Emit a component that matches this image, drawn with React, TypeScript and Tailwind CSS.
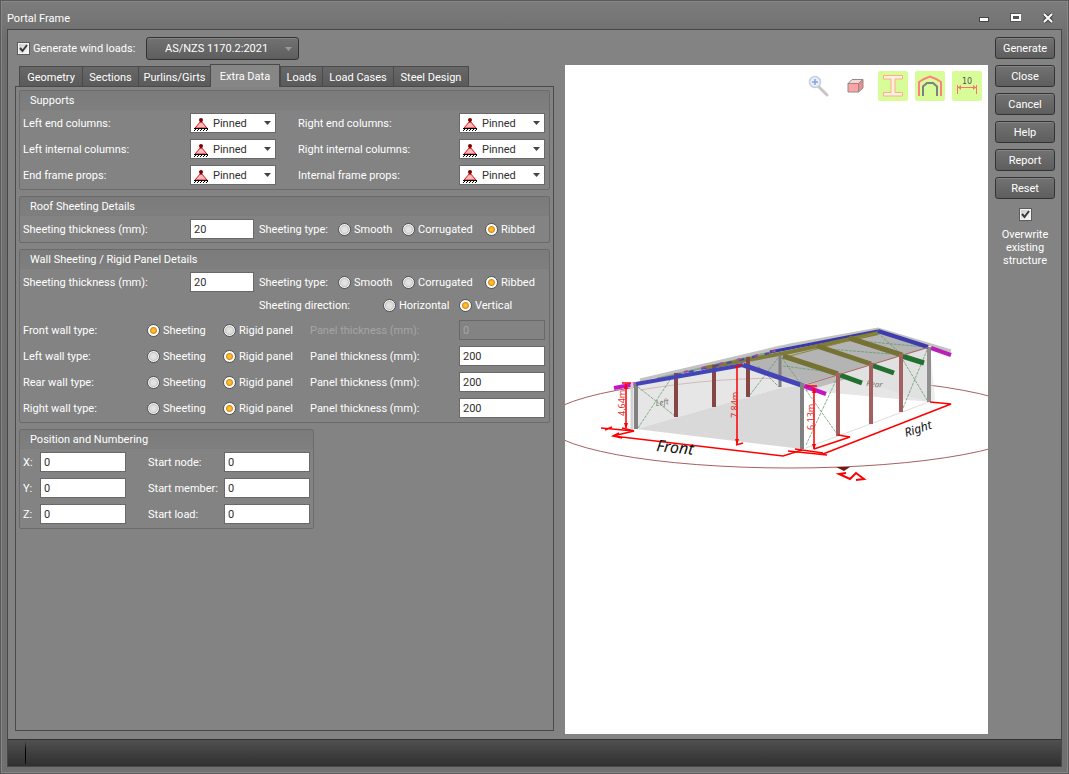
import { useId, useState, type ReactNode } from 'react';

const TABS = [
  { title: 'Geometry', width: 'w-[63px]' },
  { title: 'Sections', width: 'w-14' },
  { title: 'Purlins/Girts', width: 'w-[72px]' },
  { title: 'Extra Data', width: 'w-[70px]' },
  { title: 'Loads', width: 'w-[42px]' },
  { title: 'Load Cases', width: 'w-[71px]' },
  { title: 'Steel Design', width: 'w-[76px]' },
];
const ACTIONS = ['Generate', 'Close', 'Cancel', 'Help', 'Report', 'Reset'];

const SUPPORTS = [
  'Left end columns:',
  'Right end columns:',
  'Left internal columns:',
  'Right internal columns:',
  'End frame props:',
  'Internal frame props:',
];

const WALLS = [
  { label: 'Front wall type:', type: 'Sheeting', thickness: '0' },
  { label: 'Left wall type:', type: 'Rigid panel', thickness: '200' },
  { label: 'Rear wall type:', type: 'Rigid panel', thickness: '200' },
  { label: 'Right wall type:', type: 'Rigid panel', thickness: '200' },
];

const NUMBERING = [
  ['X:', 'Start node:'],
  ['Y:', 'Start member:'],
  ['Z:', 'Start load:'],
];

function CheckBox({ id }: { id: string }) {
  return (
    <span className="grid size-[13px] shrink-0">
      <input
        id={id}
        type="checkbox"
        defaultChecked
        className="peer col-start-1 row-start-1 size-[13px] appearance-none border border-[#5c5c5c] bg-linear-to-br from-[#c8c8c8] to-white shadow-[inset_0_0_0_1px_#f4f4f4]"
      />
      <svg
        viewBox="0 0 13 13"
        className="pointer-events-none invisible col-start-1 row-start-1 size-[13px] peer-checked:visible"
      >
        <path d="M3 6 L5.5 9 L10 3" fill="none" stroke="#3a3a3a" strokeWidth="2" />
      </svg>
    </span>
  );
}

function Radio({ name, label, checked, onChange }: {
  name: string;
  label: string;
  checked: boolean;
  onChange: () => void;
}) {
  return (
    <label className="flex items-center gap-[3px] whitespace-nowrap">
      <input
        type="radio"
        name={name}
        checked={checked}
        onChange={onChange}
        className="size-[13px] shrink-0 appearance-none rounded-full border border-[#555] bg-[radial-gradient(circle,#e6e6e6_0px,#dedede_3px,#c4c4c4_4px,#f4f4f4_5px)] checked:bg-[radial-gradient(circle,#ffd23c_0px,#f9b01c_2px,#d98a20_3px,#ffffff_4px)]"
      />
      {label}
    </label>
  );
}

function RadioSet({ options, initial, className }: { options: string[]; initial: string; className: string }) {
  const name = useId();
  const [value, setValue] = useState(initial);
  return (
    <div className={className}>
      {options.map((o) => (
        <Radio key={o} name={name} label={o} checked={value === o} onChange={() => setValue(o)} />
      ))}
    </div>
  );
}

function TextBox({ id, value, className, disabled }: {
  id: string;
  value: string;
  className: string;
  disabled?: boolean;
}) {
  return (
    <input
      id={id}
      type="text"
      defaultValue={value}
      disabled={disabled}
      className={`h-5 border border-[#696969] bg-white pl-[3px] text-[#303030] outline-none disabled:bg-transparent disabled:text-[#a5a5a5] ${className}`}
    />
  );
}

function Group({ title, className = '', children }: { title: string; className?: string; children: ReactNode }) {
  return (
    <fieldset className={`min-w-0 rounded-[2px] border border-[#6b6b6b] ${className}`}>
      <div className="h-[19px] border-b border-[#7d7d7d] bg-linear-to-b from-[#7b7b7b] to-[#7f7f7f] pl-2.5 leading-5">
        {title}
      </div>
      <div className="px-[3px] py-[3px]">{children}</div>
    </fieldset>
  );
}

function PinnedIcon() {
  return (
    <svg viewBox="0 0 16 16" className="size-4 shrink-0">
      <path d="M8 6 L14 13 H2 Z" fill="#fbb" stroke="#e01010" />
      <path d="M8 4 V8" stroke="#800000" />
      <circle cx="8" cy="5" r="2" fill="#800000" />
      <path d="M1 13.5 H15" stroke="#000" />
      <path d="M1 16 L3 14 M4 16 L6 14 M7 16 L9 14 M10 16 L12 14 M13 16 L15 14" stroke="#000" />
    </svg>
  );
}

function Arrow({ className }: { className: string }) {
  return (
    <svg viewBox="0 0 7 4" className={`pointer-events-none h-1 w-[7px] shrink-0 ${className}`}>
      <path d="M0 0 H7 L3.5 4 Z" fill="currentColor" />
    </svg>
  );
}

function SupportField({ label }: { label: string }) {
  const id = useId();
  return (
    <>
      <label htmlFor={id}>{label}</label>
      <div className="flex h-5 w-[86px] items-center border border-[#696969] bg-white pl-0.5 pr-1 text-[#303030]">
        <PinnedIcon />
        <select id={id} className="min-w-0 flex-1 appearance-none pl-1 outline-none">
          <option>Pinned</option>
          <option>Fixed</option>
        </select>
        <Arrow className="text-[#444]" />
      </div>
    </>
  );
}

function SheetingRow() {
  const id = useId();
  return (
    <div className="grid h-5 grid-cols-[167px_69px_79px_auto] items-center">
      <label htmlFor={id}>Sheeting thickness (mm):</label>
      <TextBox id={id} value="20" className="w-16" />
      <span>Sheeting type:</span>
      <RadioSet
        options={['Smooth', 'Corrugated', 'Ribbed']}
        initial="Ribbed"
        className="grid grid-cols-[64px_83px_60px]"
      />
    </div>
  );
}

function WallRow({ label, type, thickness }: { label: string; type: string; thickness: string }) {
  const id = useId();
  const name = useId();
  const [value, setValue] = useState(type);
  const off = value === 'Sheeting';
  return (
    <div className="grid h-5 grid-cols-[124px_76px_87px_149px_86px] items-center">
      <span>{label}</span>
      {['Sheeting', 'Rigid panel'].map((o) => (
        <Radio key={o} name={name} label={o} checked={value === o} onChange={() => setValue(o)} />
      ))}
      <label htmlFor={id} className={off ? 'text-[#a5a5a5]' : ''}>
        Panel thickness (mm):
      </label>
      <TextBox id={id} value={thickness} disabled={off} className="w-[86px]" />
    </div>
  );
}

function NumberField({ label }: { label: string }) {
  const id = useId();
  return (
    <>
      <label htmlFor={id}>{label}</label>
      <TextBox id={id} value="0" className="w-[86px]" />
    </>
  );
}

function ViewTools() {
  const tool = 'grid size-[30px] place-items-center';
  const active = `${tool} rounded-[2px] bg-[#d8fc98]`;
  return (
    <div className="flex justify-end gap-[7px] p-1.5">
      <button type="button" aria-label="Zoom" className={tool}>
        <svg viewBox="0 0 24 24" className="size-6">
          <path d="M12 13 L20 21" stroke="#c9c5c5" strokeWidth="3" strokeLinecap="round" />
          <circle cx="8" cy="8" r="5.5" fill="#e6effc" stroke="#c5cfdc" strokeWidth="1.5" />
          <path d="M8 5 V11 M5 8 H11" stroke="#8ba0e0" strokeWidth="1.5" />
        </svg>
      </button>
      <button type="button" aria-label="Render" className={tool}>
        <svg viewBox="0 0 18 18" className="size-[18px]">
          <g stroke="#8c8c8c" strokeLinejoin="round">
            <path d="M1 6.5 L5 2.5 H16 L11.5 6.5 Z" fill="#fcd4d4" />
            <path d="M1 6.5 H11.5 V15 H1 Z" fill="#fba5a5" />
            <path d="M11.5 6.5 L16 2.5 V11 L11.5 15 Z" fill="#f08c8c" />
          </g>
        </svg>
      </button>
      <button type="button" aria-label="Sections" className={active}>
        <svg viewBox="0 0 30 30" className="size-[30px]">
          <path
            d="M5.5 4.5 H24.5 V8 H17 V21.5 H24.5 V25 H5.5 V21.5 H13 V8 H5.5 Z"
            fill="#fff0e4"
            stroke="#ffae84"
          />
        </svg>
      </button>
      <button type="button" aria-label="Cladding" className={active}>
        <svg viewBox="0 0 30 30" className="size-[30px]" fill="none" strokeWidth="2">
          <path d="M4 25 V11 L9 8 L15 5.5 L21 8 L26 11 V25" stroke="#ff8080" />
          <path d="M8 25 V15.5 L12 12 H18 L22 15.5 V25" stroke="#808080" />
        </svg>
      </button>
      <button type="button" aria-label="Dimensions" className={active}>
        <svg viewBox="0 0 30 30" className="size-[30px]">
          <text x="15" y="13" textAnchor="middle" fontSize="8" fontFamily="DejaVu Sans" fill="#555">
            10
          </text>
          <path d="M5.5 14 V23 M24.5 14 V23 M6 16.5 H24" stroke="#ff7070" />
          <path d="M6 16.5 L9 14 V19 Z M24 16.5 L21 14 V19 Z" fill="#ff7070" />
        </svg>
      </button>
    </div>
  );
}

// [path, colour, width]
const MEMBERS: [string, string, number][] = [
  // roof edge and ridge
  ['M657 378 L790 348', '#8ba68f', 3],
  ['M640 380 L790 345 L878 329 L951 351', '#c2c2c2', 3],
  ['M770 352 L878 331', '#3838a8', 3],
  ['M705 368 L790 352 L878 333', '#807c38', 4],
  ['M790 356 L878 333', '#8c8840', 1],
  // rear gable
  ['M780 355 V387', '#808080', 3],
  ['M929 347 V402', '#909090', 4],
  ['M878 331 L928 347', '#3c3cae', 4],
  ['M931 348 L951 355', '#b820b8', 4],
  // left wall columns
  ['M676 373 V417', '#864646', 4],
  ['M714 365 V407', '#864646', 4],
  ['M748 357 V397', '#864646', 4],
  // internal rafters
  ['M783 356 L838 374', '#757234', 5],
  ['M817 346 L871 364', '#757234', 5],
  ['M849 338 L902 355', '#757234', 5],
  ['M840 375 L862 383', '#227030', 5],
  ['M871 365 L894 373', '#227030', 5],
  ['M902 356 L924 363', '#227030', 5],
  // right wall columns
  ['M838 373 V436', '#a46060', 4],
  ['M871 363 V424', '#a46060', 4],
  ['M901 354 V412', '#a46060', 4],
  ['M805 385 L929 347', '#b06464', 1],
  // front gable
  ['M614 388 L636 384', '#c414c8', 4],
  ['M632 383 V430', '#d0d0d0', 3],
  ['M636 383 V429', '#808080', 4],
  ['M636 384 L743 365', '#4444b8', 4],
  ['M743 365 L801 385', '#4444b8', 5],
  ['M804 386 L826 394', '#c414c8', 4],
  ['M802 383 V449', '#808080', 4],
];

const BRACING = [
  'M638 387 L675 416 M638 428 L674 374',
  'M750 395 L778 358 M758 366 L779 387',
  'M782 358 L800 383 M783 366 L838 373',
  'M806 390 L837 434 M806 445 L838 376',
  'M903 360 L927 400 M903 408 L927 350',
  'M878 333 L901 354 M850 340 L925 347 M817 348 L890 354',
];

const DIMENSIONS = [
  'M626 384 V428 M622 383 H631 M622 428 L634 431',
  'M737 367 V444 M735 367 L742 365 M736 445 L743 443',
  'M814 388 V449 M807 386 H817',
  'M601 428 L634 431 L613 436 M605 430 L612 427',
  'M613 436 L783 456 L802 450 M619 433 L613 436 L622 438',
  'M788 451 L827 455 M795 449 L823 453',
  'M930 402 L951 404 L823 454',
  'M838 435 L850 437 L814 449',
];

function FrameScene() {
  return (
    <svg
      viewBox="565 107 423 627"
      className="min-h-0 w-full grow basis-[300px]"
      fontFamily="Noto Sans, sans-serif"
      role="img"
      aria-label="Portal frame model"
    >
      <ellipse cx="790" cy="422.5" rx="245" ry="45.5" fill="none" stroke="#a86060" />
      <path d="M636 383 L780 345 L930 347 V402 L780 388 L636 429 Z" fill="#e6e6e6" />
      <path d="M636 429 L780 388 L802 386 V449 Z" fill="#d9d9d9" />
      <path d="M743 364 L780 352 L878 330 L930 348 L802 385 Z" fill="#b4b4b4" />
      <path d="M802 385 L930 347 L935 400 L929 402 L838 374 Z" fill="#dcdcdc" opacity="0.5" />
      <path d="M805 385 L838 375 L850 378 L806 391 Z" fill="#bdbdbd" />
      <path d="M640 390 C700 380 740 378 800 378" fill="none" stroke="#d4baba" />
      <path d="M806 448 L929 402" stroke="#ddd" />
      <g fontStyle="italic" fontSize="8" fill="#777">
        <text transform="translate(656 406) rotate(-8)">Left</text>
        <text transform="translate(866 386) rotate(6)">Rear</text>
      </g>
      <g fill="none">
        {BRACING.map((d) => (
          <path key={d} d={d} stroke="#5c9a66" strokeWidth="0.75" strokeDasharray="3 1" />
        ))}
        {MEMBERS.map(([d, stroke, width]) => (
          <path key={d} d={d} stroke={stroke} strokeWidth={width} />
        ))}
        <path d="M676 375 L770 353" stroke="#4848a8" strokeWidth="2" strokeDasharray="5 8" />
        <path d="M684 372 L784 349" stroke="#a448a4" strokeWidth="2" strokeDasharray="4 14" />
        {DIMENSIONS.map((d) => (
          <path key={d} d={d} stroke="#f00" strokeWidth="1.5" />
        ))}
      </g>
      <path
        d="M626 383 L624 389 H628 Z M626 429 L624 423 H628 Z M737 445 L735 439 H739 Z M814 387 L812 393 H816 Z M814 450 L812 444 H816 Z"
        fill="#f00"
      />
      <g fill="#e03030" fontSize="9">
        <text transform="translate(625 416) rotate(-90)">4.64m</text>
        <text transform="translate(738 418) rotate(-90)">7.84m</text>
        <text transform="translate(814 430) rotate(-90)">6.13m</text>
      </g>
      <g fontStyle="italic" fill="#111">
        <text transform="translate(656 451) rotate(6)" fontSize="16">
          Front
        </text>
        <text transform="translate(906 437) rotate(-18)" fontSize="12">
          Right
        </text>
      </g>
      <path d="M836 467 H850 L844 471 Z" fill="#701818" />
      <path d="M846 473 L839 474 L850 479 L856 473 L864 479 L856 480" fill="none" stroke="#f00" strokeWidth="2" />
    </svg>
  );
}

function TitleBar() {
  return (
    <header className="flex h-7 items-center justify-between pr-1.5 text-white">
      <h1 className="pt-1.5">Portal Frame</h1>
      <div className="flex gap-4 pt-1.5">
        <button type="button" aria-label="Minimize" className="grid size-4 place-items-center">
          <svg viewBox="0 0 16 16" className="size-4">
            <path d="M3 9.5 H13" stroke="#444" strokeWidth="5" />
            <path d="M4 9.5 H12" stroke="#fff" strokeWidth="3" />
          </svg>
        </button>
        <button type="button" aria-label="Maximize" className="grid size-4 place-items-center">
          <svg viewBox="0 0 16 16" className="size-4">
            <path d="M2 3 H13 V12 H2 Z" fill="#555" />
            <path d="M4 5 H12 V10 H4 Z" fill="none" stroke="#fff" strokeWidth="2" />
          </svg>
        </button>
        <button type="button" aria-label="Close window" className="grid size-4 place-items-center">
          <svg viewBox="0 0 16 16" className="size-4">
            <path d="M4 4 L12 12 M12 4 L4 12" stroke="#444" strokeWidth="4" />
            <path d="M4 4 L12 12 M12 4 L4 12" stroke="#fff" strokeWidth="2" />
          </svg>
        </button>
      </div>
    </header>
  );
}

export default function App() {
  const [tab, setTab] = useState('Extra Data');

  return (
    <div className="flex min-h-screen flex-col border border-[#5a5a5a] bg-linear-to-b from-[#7c7c7c] via-[#6e6e6e] via-5% to-[#707070] px-1.5 pb-1.5 font-['Roboto','Noto_Sans',sans-serif] text-[11px] leading-[13px] text-white shadow-[inset_0_0_0_1px_#868686]">
      <TitleBar />
      <div className="flex grow flex-col border border-[#474747] bg-[#838383]">
        <main className="flex grow pb-[5px] pl-[7px] pr-1.5 pt-[7px]">
          <section className="flex w-[539px] shrink-0 flex-col pb-[3px]">
            <div className="flex h-[23px] items-center pl-0.5">
              <CheckBox id="wind" />
              <label htmlFor="wind" className="w-[116px] pl-[3px]">
                Generate wind loads:
              </label>
              <div className="flex h-[23px] w-[153px] items-center rounded-[3px] border border-[#333] bg-linear-to-b from-[#727272] to-[#5e5e5e] pr-1.5 shadow-[inset_0_1px_0_#858585]">
                <select aria-label="Wind code" className="min-w-0 flex-1 appearance-none pl-[18px] outline-none">
                  <option>AS/NZS 1170.2:2021</option>
                </select>
                <Arrow className="text-[#999]" />
              </div>
            </div>
            <div role="tablist" className="mt-1 flex items-end pl-1">
              {TABS.map(({ title, width }) => (
                <button
                  key={title}
                  type="button"
                  role="tab"
                  aria-selected={title === tab}
                  onClick={() => setTab(title)}
                  className={`border border-b-0 border-[#4a4a4a] last:border-r ${width} ${
                    title === tab
                      ? 'relative -mb-px h-[23px] bg-[#868686]'
                      : 'h-5 border-r-0 bg-linear-to-b from-[#686868] to-[#5a5a5a] pt-0.5'
                  }`}
                >
                  {title}
                </button>
              ))}
            </div>
            <div className="flex grow flex-col gap-1.5 border border-[#4a4a4a] p-[3px]">
              <Group title="Supports">
                <div className="grid grid-cols-[167px_108px_161px_86px] items-center gap-y-1.5 pb-px">
                  {SUPPORTS.map((s) => (
                    <SupportField key={s} label={s} />
                  ))}
                </div>
              </Group>
              <Group title="Roof Sheeting Details">
                <SheetingRow />
              </Group>
              <Group title="Wall Sheeting / Rigid Panel Details">
                <SheetingRow />
                <div className="grid h-7 grid-cols-[124px_auto] items-center pb-0.5 pl-[236px]">
                  <span>Sheeting direction:</span>
                  <RadioSet
                    options={['Horizontal', 'Vertical']}
                    initial="Vertical"
                    className="grid grid-cols-[76px_60px]"
                  />
                </div>
                <div className="flex flex-col gap-1.5 pb-px">
                  {WALLS.map((w) => (
                    <WallRow key={w.label} {...w} />
                  ))}
                </div>
              </Group>
              <Group title="Position and Numbering" className="w-[295px]">
                <div className="grid grid-cols-[17px_108px_76px_86px] items-center gap-y-1.5 pb-px">
                  {NUMBERING.flat().map((n) => (
                    <NumberField key={n} label={n} />
                  ))}
                </div>
              </Group>
            </div>
          </section>

          <section className="ml-[11px] mt-7 flex min-w-0 flex-1 flex-col bg-white">
            <ViewTools />
            <FrameScene />
          </section>

          <aside className="ml-[7px] flex w-[60px] shrink-0 flex-col items-center gap-1.5">
            {ACTIONS.map((a) => (
              <button
                key={a}
                type="button"
                className="h-[22px] w-full rounded-[3px] border border-[#333] bg-linear-to-b from-[#727272] to-[#5e5e5e] shadow-[inset_0_1px_0_#858585]"
              >
                {a}
              </button>
            ))}
            <label htmlFor="overwrite" className="flex flex-col items-center gap-[7px] pt-[3px] text-center">
              <CheckBox id="overwrite" />
              Overwrite existing structure
            </label>
          </aside>
        </main>
        <footer className="flex h-[27px] border-t border-[#333] bg-linear-to-b from-[#505050] to-[#303030] pl-[17px]">
          <div className="my-0.5 w-px bg-linear-to-b from-[#444] via-black to-[#111]" />
        </footer>
      </div>
    </div>
  );
}
